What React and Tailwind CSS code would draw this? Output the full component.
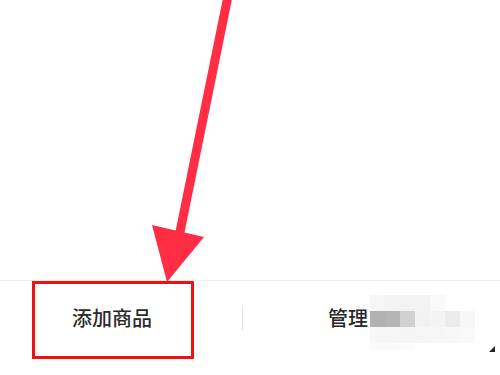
import React from "react";

const pixelRows = [
  { h: "h-[16px]", cells: ["#f6f6f6", "#f4f4f4", "#f3f3f3", "#f3f3f3", "#f9f9f9", "#ffffff", "#ffffff"] },
  { h: "h-[16px]", cells: ["#b1b1b1", "#b4b4b4", "#d1d1d1", "#f2f2f2", "#f4f4f4", "#ececec", "#f7f7f7"] },
  { h: "h-[16px]", cells: ["#f7f7f7", "#f6f6f6", "#f5f5f5", "#f6f6f6", "#f7f7f7", "#f8f8f8", "#f9f9f9"] },
  { h: "h-[7px]", cells: ["#fbfbfb", "#fbfbfb", "#fcfcfc", "#ffffff", "#ffffff", "#ffffff", "#ffffff"] },
];

const App = () => {
  return (
    <div className="relative w-[500px] h-[375px] bg-white overflow-hidden font-['Noto_Sans_CJK_SC',sans-serif]">
      <div className="h-[280px]" />

      {/* bottom tab bar */}
      <div className="h-[95px] border-t border-[#ececec]">
        <div className="flex items-center h-[74px]">
          <div className="w-[242px] pl-[72px] text-[20px] font-medium text-[#2a2a2a] leading-none">
            添加商品
          </div>
          <div className="w-px h-[23px] bg-[#e4e4e4]" />
          <div className="flex items-center pl-[85px]">
            <span className="text-[20px] font-medium text-[#2a2a2a] leading-none">管理</span>
            <div className="flex flex-col mt-[8px] ml-[2px]">
              {pixelRows.map((row, i) => (
                <div key={i} className={`flex ${row.h}`}>
                  {row.cells.map((c, j) => (
                    <div key={j} className="w-[15px] h-full" style={{ backgroundColor: c }} />
                  ))}
                </div>
              ))}
            </div>
          </div>
        </div>
      </div>

      {/* small corner mark */}
      <svg className="absolute left-[488px] top-[345px]" width="8" height="8" viewBox="0 0 8 8">
        <path d="M7 1 L7 7 L1 7 Z" fill="#222" />
      </svg>

      {/* annotation: red box */}
      <div className="absolute left-[32px] top-[281px] w-[162px] h-[78px] border-[3px] border-[#f20f0f]" />

      {/* annotation: arrow */}
      <svg className="absolute left-0 top-0" width="500" height="290" viewBox="0 0 500 290">
        <line x1="228" y1="-4" x2="180" y2="232" stroke="#ff2e45" strokeWidth="9" />
        <polygon points="152,225 204,237 167,282" fill="#ff2e45" />
      </svg>
    </div>
  );
};

export default App;
